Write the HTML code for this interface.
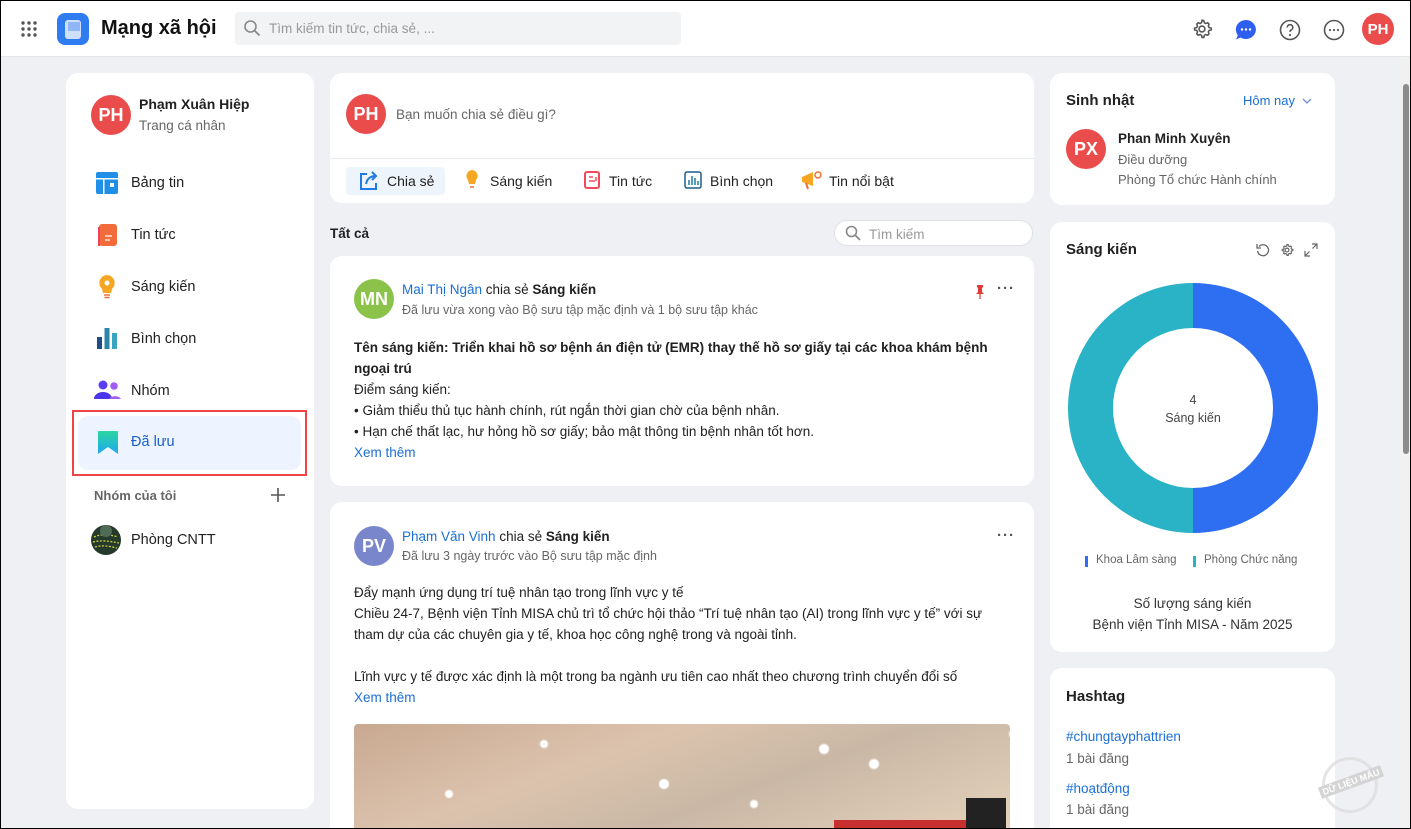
<!DOCTYPE html>
<html style="height:829px;overflow:hidden"><head><meta charset="utf-8"><style>
*{box-sizing:border-box;margin:0;padding:0}
body{width:1411px;height:829px;overflow:hidden;background:#eef0f4;font-family:"Liberation Sans",sans-serif;color:#212121;position:relative;font-size:13px}
.a{position:absolute;white-space:nowrap}
.card{position:absolute;background:#fff;border-radius:12px}
.av{position:absolute;border-radius:50%;color:#fff;font-weight:bold;display:flex;align-items:center;justify-content:center}
.g{color:#666}
.bl{color:#1a6fd6}
</style></head><body>
<div class="a" style="left:0;top:0;width:1411px;height:57px;background:#fff;border-bottom:1px solid #e4e6ea"></div>
<div style="position:absolute;left:0;top:0;width:1411px;height:829px;border:1px solid #000;z-index:10;pointer-events:none"></div>
<svg class="a" style="left:21px;top:21px" width="16" height="16"><g fill="#555"><circle cx="2" cy="2" r="1.7"/><circle cx="8" cy="2" r="1.7"/><circle cx="14" cy="2" r="1.7"/><circle cx="2" cy="8" r="1.7"/><circle cx="8" cy="8" r="1.7"/><circle cx="14" cy="8" r="1.7"/><circle cx="2" cy="14" r="1.7"/><circle cx="8" cy="14" r="1.7"/><circle cx="14" cy="14" r="1.7"/></g></svg>
<div class="a" style="left:57px;top:13px;width:32px;height:32px;border-radius:8px;background:#2f7cf0"></div>
<div class="a" style="left:65px;top:20px;width:16px;height:19px;border-radius:3px;background:#cfe0fc"></div>
<div class="a" style="left:68px;top:22px;width:12px;height:9px;background:#8fb6f6"></div>
<div class="a" style="left:101px;top:17px;font-size:20px;font-weight:bold;color:#111">Mạng xã hội</div>
<div class="a" style="left:235px;top:12px;width:446px;height:33px;background:#f2f3f5;border-radius:4px"></div>
<svg class="a" style="left:243px;top:19px" width="18" height="18"><circle cx="7.5" cy="7.5" r="5.5" fill="none" stroke="#888" stroke-width="1.6"/><path d="M11.5 11.5l5 5" stroke="#888" stroke-width="1.8"/></svg>
<div class="a g" style="left:269px;top:21px;font-size:13.5px;color:#999">Tìm kiếm tin tức, chia sẻ, ...</div>
<svg class="a" style="left:1191px;top:18px" width="22" height="22" viewBox="0 0 24 24"><path fill="none" stroke="#555" stroke-width="1.7" d="M12 2.5l2 .3.5 2.3 1.6.9 2.2-.8 1.4 1.5-.8 2.2.9 1.6 2.3.5v2l-2.3.5-.9 1.6.8 2.2-1.4 1.5-2.2-.8-1.6.9-.5 2.3h-2l-.5-2.3-1.6-.9-2.2.8-1.4-1.5.8-2.2-.9-1.6-2.3-.5v-2l2.3-.5.9-1.6-.8-2.2 1.4-1.5 2.2.8 1.6-.9.5-2.3z"/><circle cx="12" cy="12" r="3.2" fill="none" stroke="#555" stroke-width="1.7"/></svg>
<svg class="a" style="left:1235px;top:19px" width="22" height="22"><path d="M11 1a10 9.5 0 1 1-5.5 17.5L1 20.5l1.8-4.3A10 9.5 0 0 1 11 1z" fill="#2f5ff0"/><g fill="#fff"><circle cx="7" cy="10.5" r="1.2"/><circle cx="11" cy="10.5" r="1.2"/><circle cx="15" cy="10.5" r="1.2"/></g></svg>
<svg class="a" style="left:1279px;top:19px" width="22" height="22"><circle cx="11" cy="11" r="9.5" fill="none" stroke="#555" stroke-width="1.6"/><path d="M8.2 8.5a2.8 2.8 0 1 1 3.8 2.6c-.8.4-1 .9-1 1.8" fill="none" stroke="#555" stroke-width="1.6"/><circle cx="11" cy="16" r="1.1" fill="#555"/></svg>
<svg class="a" style="left:1323px;top:19px" width="22" height="22"><circle cx="11" cy="11" r="9.5" fill="none" stroke="#555" stroke-width="1.6"/><g fill="#555"><circle cx="7" cy="11" r="1.1"/><circle cx="11" cy="11" r="1.1"/><circle cx="15" cy="11" r="1.1"/></g></svg>
<div class="av" style="left:1362px;top:13px;width:32px;height:32px;background:#ea4b4b;font-size:15px">PH</div>
<div class="a" style="left:1400px;top:57px;width:11px;height:772px;background:#f1f1f1"></div>
<div class="a" style="left:1403px;top:84px;width:6px;height:370px;background:#8c8c8c;border-radius:3px"></div>

<div class="card" style="left:66px;top:73px;width:248px;height:736px"></div>
<div class="av" style="left:91px;top:95px;width:40px;height:40px;background:#ea4b4b;font-size:18px">PH</div>
<div class="a" style="left:139px;top:96px;font-size:14px;font-weight:bold">Phạm Xuân Hiệp</div>
<div class="a g" style="left:139px;top:118px;font-size:13.5px">Trang cá nhân</div>
<svg class="a" style="left:96px;top:172px" width="22" height="22"><rect x="0" y="0" width="22" height="22" rx="2" fill="#1f8fe8"/><rect x="0" y="6" width="22" height="1.5" fill="#fff"/><rect x="7" y="7" width="1.5" height="15" fill="#fff"/><rect x="14" y="11" width="4" height="4" fill="#fff"/></svg>
<div class="a" style="left:131px;top:175px;font-size:14.5px">Bảng tin</div>
<svg class="a" style="left:96px;top:222px" width="22" height="26"><rect x="3" y="2" width="18" height="22" rx="3" fill="#f26b3a"/><path d="M3 5v19" stroke="#f04060" stroke-width="2"/><g stroke="#fff" stroke-width="1.2"><path d="M9 14h7M9 18h5"/></g></svg>
<div class="a" style="left:131px;top:227px;font-size:14.5px">Tin tức</div>
<svg class="a" style="left:97px;top:274px" width="20" height="26"><path d="M10 1a8 8 0 0 1 5 14l-1 4h-8l-1-4A8 8 0 0 1 10 1z" fill="#f5a623"/><circle cx="10" cy="9" r="2.5" fill="#fff"/><path d="M7 21h6M7.5 23.5h5" stroke="#f07030" stroke-width="1.4"/></svg>
<div class="a" style="left:131px;top:279px;font-size:14.5px">Sáng kiến</div>
<svg class="a" style="left:96px;top:325px" width="22" height="24"><rect x="1" y="12" width="5" height="12" fill="#1d4e89"/><rect x="8.5" y="3" width="5" height="21" fill="#2b86a8"/><rect x="16" y="8" width="5" height="16" fill="#3aa5c0"/></svg>
<div class="a" style="left:131px;top:331px;font-size:14.5px">Bình chọn</div>
<svg class="a" style="left:94px;top:380px" width="28" height="20"><circle cx="9" cy="5" r="4.5" fill="#5b3cf0"/><path d="M0 19a9 7 0 0 1 18 0z" fill="#4c36ea"/><circle cx="20" cy="6" r="3.8" fill="#a35cf0"/><path d="M15 19a7 6 0 0 1 12 0z" fill="#a35cf0"/></svg>
<div class="a" style="left:131px;top:383px;font-size:14.5px">Nhóm</div>
<div class="a" style="left:72px;top:410px;width:235px;height:66px;border:2px solid #f04444"></div>
<div class="a" style="left:78px;top:416px;width:223px;height:54px;background:#edf4ff;border-radius:10px"></div>
<svg class="a" style="left:98px;top:431px" width="20" height="24"><defs><linearGradient id="bm" x1="0" y1="0" x2="0" y2="1"><stop offset="0" stop-color="#2bd6a0"/><stop offset="1" stop-color="#1fa8f0"/></linearGradient></defs><path d="M0 1a1 1 0 0 1 1-1h18a1 1 0 0 1 1 1v22l-10-7-10 7z" fill="url(#bm)"/></svg>
<div class="a" style="left:131px;top:434px;font-size:14.5px;color:#1a5fc8">Đã lưu</div>
<div class="a" style="left:94px;top:488px;font-size:13px;font-weight:bold;color:#666">Nhóm của tôi</div>
<svg class="a" style="left:271px;top:488px" width="14" height="14"><path d="M7 0v14M0 7h14" stroke="#555" stroke-width="1.6"/></svg>
<svg class="a" style="left:91px;top:525px" width="30" height="30"><circle cx="15" cy="15" r="15" fill="#253a2a"/><path d="M3 12c6-3 14-3 24 0M2 17c8-2 16-1 26 1M4 22c7-2 14-1 22 1" stroke="#c8d040" stroke-width="1.3" fill="none" stroke-dasharray="2 1.5"/><circle cx="15" cy="6" r="6" fill="#4f6a55"/></svg>
<div class="a" style="left:131px;top:532px;font-size:14.5px">Phòng CNTT</div>

<div class="card" style="left:330px;top:73px;width:704px;height:130px"></div>
<div class="av" style="left:346px;top:94px;width:40px;height:40px;background:#ea4b4b;font-size:18px">PH</div>
<div class="a g" style="left:396px;top:107px;font-size:13.5px">Bạn muốn chia sẻ điều gì?</div>
<div class="a" style="left:330px;top:158px;width:704px;height:1px;background:#e6e8ec"></div>
<div class="a" style="left:346px;top:167px;width:99px;height:28px;background:#eef4fb;border-radius:4px"></div>
<svg class="a" style="left:359px;top:171px" width="20" height="20"><path d="M8 3H2v15h15v-6" fill="none" stroke="#1f7ae8" stroke-width="2"/><path d="M7 13c1-5 4-8 10-8M13 1l4 4-4 4" fill="none" stroke="#1f7ae8" stroke-width="2"/></svg>
<div class="a" style="left:387px;top:173px;font-size:14px">Chia sẻ</div>
<svg class="a" style="left:465px;top:169px" width="14" height="22"><path d="M7 1a6 6 0 0 1 4 10l-1 4H4l-1-4A6 6 0 0 1 7 1z" fill="#f5a623"/><path d="M5 18h4" stroke="#f07030" stroke-width="1.5"/></svg>
<div class="a" style="left:490px;top:173px;font-size:14px">Sáng kiến</div>
<svg class="a" style="left:584px;top:171px" width="16" height="18"><rect x="1" y="1" width="14" height="16" rx="2" fill="none" stroke="#f04a5a" stroke-width="2"/><path d="M5 6h4M5 10h6M12 6v4" stroke="#f04a5a" stroke-width="1.5"/></svg>
<div class="a" style="left:609px;top:173px;font-size:14px">Tin tức</div>
<svg class="a" style="left:684px;top:171px" width="18" height="18"><rect x="1" y="1" width="16" height="16" rx="2" fill="none" stroke="#1d5e8c" stroke-width="1.5"/><path d="M5 14V9M8 14V5M11 14V7M14 14V10" stroke="#2b86a8" stroke-width="1.6"/></svg>
<div class="a" style="left:710px;top:173px;font-size:14px">Bình chọn</div>
<svg class="a" style="left:801px;top:170px" width="22" height="20"><path d="M1 7l11-5v14L1 12z" fill="#f5a623"/><circle cx="17" cy="5" r="3" fill="none" stroke="#f07030" stroke-width="1.5"/><path d="M5 13l2 6" stroke="#f07030" stroke-width="2"/></svg>
<div class="a" style="left:829px;top:173px;font-size:14px">Tin nổi bật</div>

<div class="a" style="left:330px;top:226px;font-size:13.5px;font-weight:bold">Tất cả</div>
<div class="a" style="left:834px;top:220px;width:199px;height:26px;background:#fff;border:1px solid #dfe1e5;border-radius:13px"></div>
<svg class="a" style="left:845px;top:225px" width="16" height="16"><circle cx="6.5" cy="6.5" r="5" fill="none" stroke="#888" stroke-width="1.6"/><path d="M10 10l5 5" stroke="#888" stroke-width="1.8"/></svg>
<div class="a" style="left:869px;top:227px;font-size:13.5px;color:#999">Tìm kiếm</div>

<div class="card" style="left:330px;top:256px;width:704px;height:230px"></div>
<div class="av" style="left:354px;top:279px;width:40px;height:40px;background:#8bc34a;font-size:18px">MN</div>
<div class="a" style="left:402px;top:282px;font-size:13.5px"><span class="bl">Mai Thị Ngân</span> chia sẻ <b>Sáng kiến</b></div>
<div class="a g" style="left:402px;top:303px;font-size:12.5px">Đã lưu vừa xong vào Bộ sưu tập mặc định và 1 bộ sưu tập khác</div>
<svg class="a" style="left:975px;top:285px" width="10" height="14"><path d="M2 0h6v2l-1 1v4l2 2H1l2-2V3L2 2z" fill="#e53935"/><path d="M5 9v5" stroke="#e53935" stroke-width="1.2"/></svg>
<div class="a" style="left:997px;top:280px;font-size:15px;font-weight:bold;color:#555;letter-spacing:1px">···</div>
<div style="position:absolute;left:354px;top:337px;width:650px;font-size:13.5px;line-height:21px">
<b>Tên sáng kiến: Triển khai hồ sơ bệnh án điện tử (EMR) thay thế hồ sơ giấy tại các khoa khám bệnh ngoại trú</b><br>Điểm sáng kiến:<br>• Giảm thiểu thủ tục hành chính, rút ngắn thời gian chờ của bệnh nhân.<br>• Hạn chế thất lạc, hư hỏng hồ sơ giấy; bảo mật thông tin bệnh nhân tốt hơn.<br><span class="bl">Xem thêm</span></div>

<div class="card" style="left:330px;top:502px;width:704px;height:340px"></div>
<div class="av" style="left:354px;top:526px;width:40px;height:40px;background:#7986cb;font-size:18px">PV</div>
<div class="a" style="left:402px;top:529px;font-size:13.5px"><span class="bl">Phạm Văn Vinh</span> chia sẻ <b>Sáng kiến</b></div>
<div class="a g" style="left:402px;top:549px;font-size:12.5px">Đã lưu 3 ngày trước vào Bộ sưu tập mặc định</div>
<div class="a" style="left:997px;top:527px;font-size:15px;font-weight:bold;color:#555;letter-spacing:1px">···</div>
<div style="position:absolute;left:354px;top:582px;width:660px;font-size:13.5px;line-height:21px">Đẩy mạnh ứng dụng trí tuệ nhân tạo trong lĩnh vực y tế<br>Chiều 24-7, Bệnh viện Tỉnh MISA chủ trì tổ chức hội thảo “Trí tuệ nhân tạo (AI) trong lĩnh vực y tế” với sự tham dự của các chuyên gia y tế, khoa học công nghệ trong và ngoài tỉnh.<br><br>Lĩnh vực y tế được xác định là một trong ba ngành ưu tiên cao nhất theo chương trình chuyển đổi số<br><span class="bl">Xem thêm</span></div>
<div class="a" style="left:354px;top:724px;width:656px;height:110px;border-radius:4px;background:linear-gradient(160deg,#c8a890 0%,#dcc3ae 35%,#c9b8a5 60%,#e5d3bd 100%);overflow:hidden">
<div style="position:absolute;left:0;top:0;width:656px;height:110px;background:radial-gradient(circle at 190px 20px,#fff 3px,transparent 5px),radial-gradient(circle at 310px 60px,#fff 4px,transparent 6px),radial-gradient(circle at 470px 25px,#fff 4px,transparent 6px),radial-gradient(circle at 95px 70px,#fff 3px,transparent 5px),radial-gradient(circle at 520px 40px,#fff 4px,transparent 6px),radial-gradient(circle at 660px 10px,#fff 4px,transparent 6px),radial-gradient(circle at 400px 80px,#fff 3px,transparent 5px)"></div>
<div style="position:absolute;left:480px;top:96px;width:150px;height:14px;background:#c83030"></div>
<div style="position:absolute;left:612px;top:74px;width:40px;height:36px;background:#222"></div>
</div>

<div class="card" style="left:1050px;top:73px;width:285px;height:132px"></div>
<div class="a" style="left:1066px;top:92px;font-size:15px;font-weight:bold">Sinh nhật</div>
<div class="a bl" style="left:1243px;top:93px;font-size:13px">Hôm nay</div>
<svg class="a" style="left:1302px;top:97px" width="10" height="8"><path d="M1 2l4 4 4-4" fill="none" stroke="#6a8fd8" stroke-width="1.3"/></svg>
<div class="av" style="left:1066px;top:129px;width:40px;height:40px;background:#ea4b4b;font-size:18px">PX</div>
<div class="a" style="left:1118px;top:131px;font-size:13.5px;font-weight:bold">Phan Minh Xuyên</div>
<div class="a g" style="left:1118px;top:152px;font-size:13px">Điều dưỡng</div>
<div class="a g" style="left:1118px;top:172px;font-size:13px">Phòng Tổ chức Hành chính</div>

<div class="card" style="left:1050px;top:222px;width:285px;height:430px"></div>
<div class="a" style="left:1066px;top:241px;font-size:15px;font-weight:bold">Sáng kiến</div>
<svg class="a" style="left:1256px;top:243px" width="14" height="14"><path d="M3 3.5A5.5 5.5 0 1 1 1.6 8" fill="none" stroke="#666" stroke-width="1.3"/><path d="M1 1v4h4" fill="none" stroke="#666" stroke-width="1.3"/></svg>
<svg class="a" style="left:1280px;top:243px" width="14" height="14" viewBox="0 0 24 24"><path fill="none" stroke="#666" stroke-width="2" d="M12 2.5l2 .3.5 2.3 1.6.9 2.2-.8 1.4 1.5-.8 2.2.9 1.6 2.3.5v2l-2.3.5-.9 1.6.8 2.2-1.4 1.5-2.2-.8-1.6.9-.5 2.3h-2l-.5-2.3-1.6-.9-2.2.8-1.4-1.5.8-2.2-.9-1.6-2.3-.5v-2l2.3-.5.9-1.6-.8-2.2 1.4-1.5 2.2.8 1.6-.9.5-2.3z"/><circle cx="12" cy="12" r="3.2" fill="none" stroke="#666" stroke-width="2"/></svg>
<svg class="a" style="left:1304px;top:243px" width="14" height="14"><path d="M8 1h5v5M13 1L8.5 5.5M6 13H1V8M1 13l4.5-4.5" fill="none" stroke="#666" stroke-width="1.2"/></svg>
<svg class="a" style="left:1068px;top:283px" width="250" height="250"><path d="M125 0A125 125 0 0 1 125 250V205A80 80 0 0 0 125 45z" fill="#2d6ff0"/><path d="M125 0A125 125 0 0 0 125 250V205A80 80 0 0 1 125 45z" fill="#2ab3c6"/></svg>
<div class="a" style="left:1068px;top:393px;width:250px;text-align:center;font-size:12.5px;color:#444">4</div>
<div class="a" style="left:1068px;top:411px;width:250px;text-align:center;font-size:12.5px;color:#444">Sáng kiến</div>
<div class="a" style="left:1085px;top:556px;width:3px;height:11px;background:#2d6ff0"></div>
<div class="a g" style="left:1096px;top:554px;font-size:11.5px">Khoa Lâm sàng</div>
<div class="a" style="left:1193px;top:556px;width:3px;height:11px;background:#2ab3c6"></div>
<div class="a g" style="left:1204px;top:554px;font-size:11.5px">Phòng Chức năng</div>
<div class="a" style="left:1050px;top:596px;width:285px;text-align:center;font-size:13.5px;color:#333">Số lượng sáng kiến</div>
<div class="a" style="left:1050px;top:617px;width:285px;text-align:center;font-size:13.5px;color:#333">Bệnh viện Tỉnh MISA - Năm 2025</div>

<div class="card" style="left:1050px;top:668px;width:285px;height:180px"></div>
<div class="a" style="left:1066px;top:688px;font-size:15px;font-weight:bold">Hashtag</div>
<div class="a bl" style="left:1066px;top:729px;font-size:13.5px">#chungtayphattrien</div>
<div class="a g" style="left:1066px;top:751px;font-size:13.5px">1 bài đăng</div>
<div class="a bl" style="left:1066px;top:781px;font-size:13.5px">#hoạtđộng</div>
<div class="a g" style="left:1066px;top:802px;font-size:13.5px">1 bài đăng</div>
<div class="a" style="left:1322px;top:757px;width:56px;height:56px;border:3px solid #ddd;border-radius:50%;opacity:.8"></div>
<div class="a" style="left:1318px;top:776px;font-size:9px;font-weight:bold;color:#fff;background:#d4d4d4;padding:1px 3px;transform:rotate(-20deg)">DỮ LIỆU MẪU</div>
</body></html>
